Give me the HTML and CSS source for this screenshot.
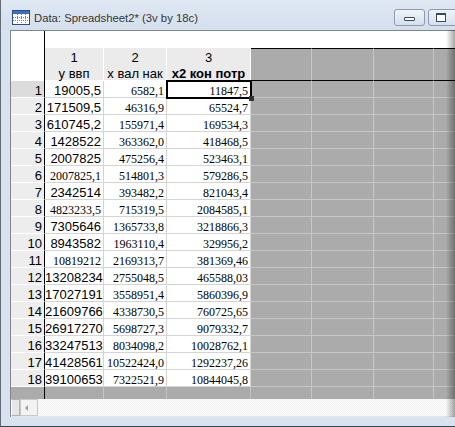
FILE: index.html
```html
<!DOCTYPE html>
<html>

<head>
  <title>Data: Spreadsheet2*</title>
  <link rel="stylesheet" href="styles.css">
</head>

<body>
  <div class="window">
    <div class="titlebar">
      <svg class="app-icon" width="18" height="15" viewBox="0 0 18 15">
        <rect x="0.5" y="0.5" width="17" height="14" fill="#fff" stroke="#2a4c8c"/>
        <rect x="1" y="1" width="16" height="3" fill="#3f6fc0"/>
        <g stroke="#5b82c9" stroke-dasharray="1 1">
          <line x1="5.5" y1="4" x2="5.5" y2="14"/>
          <line x1="9.5" y1="4" x2="9.5" y2="14"/>
          <line x1="13.5" y1="4" x2="13.5" y2="14"/>
          <line x1="1" y1="7.5" x2="17" y2="7.5"/>
          <line x1="1" y1="10.5" x2="17" y2="10.5"/>
        </g>
      </svg>
      <span class="title">Data: Spreadsheet2* (3v by 18c)</span>
      <div class="caption">
        <div class="cap-btn"><span class="min-icon"></span></div>
        <div class="cap-btn"><span class="max-icon"></span></div>
      </div>
    </div>

    <div class="client">
      <div class="sheet">
        <div class="row top-row">
          <div class="rh blank"></div>
          <div class="wide"></div>
        </div>

        <div class="row head-row">
          <div class="rh blank"></div>
          <div class="ch c1">1<br>у ввп</div>
          <div class="ch c2">2<br>х вал нак</div>
          <div class="ch c3"><span class="num">3</span><br><b>х2 кон потр</b></div>
          <div class="g gh g1"></div>
          <div class="g gh g2"></div>
          <div class="g gh g3"></div>
          <div class="g gh g4"></div>
        </div>

        <div class="row">
          <div class="rh sel">1</div>
          <div class="cell c1 a">19005,5</div>
          <div class="cell c2">6582,1</div>
          <div class="cell c3 sel">11847,5</div>
          <div class="g g1"></div><div class="g g2"></div><div class="g g3"></div><div class="g g4"></div>
        </div>
        <div class="row">
          <div class="rh">2</div>
          <div class="cell c1 a">171509,5</div>
          <div class="cell c2">46316,9</div>
          <div class="cell c3">65524,7</div>
          <div class="g g1"></div><div class="g g2"></div><div class="g g3"></div><div class="g g4"></div>
        </div>
        <div class="row">
          <div class="rh">3</div>
          <div class="cell c1 a">610745,2</div>
          <div class="cell c2">155971,4</div>
          <div class="cell c3">169534,3</div>
          <div class="g g1"></div><div class="g g2"></div><div class="g g3"></div><div class="g g4"></div>
        </div>
        <div class="row">
          <div class="rh">4</div>
          <div class="cell c1 a">1428522</div>
          <div class="cell c2">363362,0</div>
          <div class="cell c3">418468,5</div>
          <div class="g g1"></div><div class="g g2"></div><div class="g g3"></div><div class="g g4"></div>
        </div>
        <div class="row">
          <div class="rh">5</div>
          <div class="cell c1 a">2007825</div>
          <div class="cell c2">475256,4</div>
          <div class="cell c3">523463,1</div>
          <div class="g g1"></div><div class="g g2"></div><div class="g g3"></div><div class="g g4"></div>
        </div>
        <div class="row">
          <div class="rh">6</div>
          <div class="cell c1">2007825,1</div>
          <div class="cell c2">514801,3</div>
          <div class="cell c3">579286,5</div>
          <div class="g g1"></div><div class="g g2"></div><div class="g g3"></div><div class="g g4"></div>
        </div>
        <div class="row">
          <div class="rh">7</div>
          <div class="cell c1 a">2342514</div>
          <div class="cell c2">393482,2</div>
          <div class="cell c3">821043,4</div>
          <div class="g g1"></div><div class="g g2"></div><div class="g g3"></div><div class="g g4"></div>
        </div>
        <div class="row">
          <div class="rh">8</div>
          <div class="cell c1">4823233,5</div>
          <div class="cell c2">715319,5</div>
          <div class="cell c3">2084585,1</div>
          <div class="g g1"></div><div class="g g2"></div><div class="g g3"></div><div class="g g4"></div>
        </div>
        <div class="row">
          <div class="rh">9</div>
          <div class="cell c1 a">7305646</div>
          <div class="cell c2">1365733,8</div>
          <div class="cell c3">3218866,3</div>
          <div class="g g1"></div><div class="g g2"></div><div class="g g3"></div><div class="g g4"></div>
        </div>
        <div class="row">
          <div class="rh">10</div>
          <div class="cell c1 a">8943582</div>
          <div class="cell c2">1963110,4</div>
          <div class="cell c3">329956,2</div>
          <div class="g g1"></div><div class="g g2"></div><div class="g g3"></div><div class="g g4"></div>
        </div>
        <div class="row">
          <div class="rh">11</div>
          <div class="cell c1">10819212</div>
          <div class="cell c2">2169313,7</div>
          <div class="cell c3">381369,46</div>
          <div class="g g1"></div><div class="g g2"></div><div class="g g3"></div><div class="g g4"></div>
        </div>
        <div class="row">
          <div class="rh">12</div>
          <div class="cell c1 a">13208234</div>
          <div class="cell c2">2755048,5</div>
          <div class="cell c3">465588,03</div>
          <div class="g g1"></div><div class="g g2"></div><div class="g g3"></div><div class="g g4"></div>
        </div>
        <div class="row">
          <div class="rh">13</div>
          <div class="cell c1 a">17027191</div>
          <div class="cell c2">3558951,4</div>
          <div class="cell c3">5860396,9</div>
          <div class="g g1"></div><div class="g g2"></div><div class="g g3"></div><div class="g g4"></div>
        </div>
        <div class="row">
          <div class="rh">14</div>
          <div class="cell c1 a">21609766</div>
          <div class="cell c2">4338730,5</div>
          <div class="cell c3">760725,65</div>
          <div class="g g1"></div><div class="g g2"></div><div class="g g3"></div><div class="g g4"></div>
        </div>
        <div class="row">
          <div class="rh">15</div>
          <div class="cell c1 a">26917270</div>
          <div class="cell c2">5698727,3</div>
          <div class="cell c3">9079332,7</div>
          <div class="g g1"></div><div class="g g2"></div><div class="g g3"></div><div class="g g4"></div>
        </div>
        <div class="row">
          <div class="rh">16</div>
          <div class="cell c1 a">33247513</div>
          <div class="cell c2">8034098,2</div>
          <div class="cell c3">10028762,1</div>
          <div class="g g1"></div><div class="g g2"></div><div class="g g3"></div><div class="g g4"></div>
        </div>
        <div class="row">
          <div class="rh">17</div>
          <div class="cell c1 a">41428561</div>
          <div class="cell c2">10522424,0</div>
          <div class="cell c3">1292237,26</div>
          <div class="g g1"></div><div class="g g2"></div><div class="g g3"></div><div class="g g4"></div>
        </div>
        <div class="row">
          <div class="rh">18</div>
          <div class="cell c1 a">39100653</div>
          <div class="cell c2">7322521,9</div>
          <div class="cell c3">10844045,8</div>
          <div class="g g1"></div><div class="g g2"></div><div class="g g3"></div><div class="g g4"></div>
        </div>

        <div class="row tail-row">
          <div class="rh"></div>
          <div class="g c1"></div><div class="g c2"></div><div class="g c3"></div>
          <div class="g g1"></div><div class="g g2"></div><div class="g g3"></div><div class="g g4"></div>
        </div>
      </div>

      <div class="hscroll">
        <div class="split"></div>
        <div class="arrow-btn"><span class="arrow-left"></span></div>
      </div>
    </div>

    <div class="shade"></div>
  </div>
</body>

</html>
```

FILE: styles.css
```css
body {
  margin: 0;
  font-family: "Liberation Sans", Arial, sans-serif;
  background-color: #fff;
}

.window {
  position: relative;
  width: 455px;
  height: 427px;
  box-sizing: border-box;
  overflow: hidden;
  background-color: #d8e3ef;
  border-left: 1px solid #626c78;
  border-bottom: 1px solid #3a424c;
}

/* title bar */

.titlebar {
  height: 30px;
  display: flex;
  align-items: center;
  background: linear-gradient(#dfe8f3, #d4dfec);
}

.app-icon {
  margin-left: 11px;
  margin-top: 4px;
  flex: none;
}

.title {
  margin-left: 4px;
  margin-top: 5px;
  font-size: 11.3px;
  color: #363636;
  white-space: nowrap;
}

.caption {
  margin-left: auto;
  margin-right: -4px;
  align-self: flex-start;
  margin-top: 9px;
  display: flex;
  gap: 3px;
  flex: none;
}

.cap-btn {
  width: 31px;
  height: 17px;
  box-sizing: border-box;
  border: 1px solid #8d9bb0;
  border-radius: 3px;
  background: linear-gradient(#eef3f9, #d6e0ec);
  position: relative;
}

.min-icon {
  position: absolute;
  left: 9px;
  top: 7px;
  width: 9px;
  height: 2px;
  border: 1px solid #3c495a;
  border-radius: 1px;
  background-color: #fff;
}

.max-icon {
  position: absolute;
  left: 7px;
  top: 3px;
  width: 8px;
  height: 6px;
  border: 1px solid #3c495a;
  border-top-width: 2px;
  background-color: #fff;
}

/* client area */

.client {
  margin-left: 9px;
  border-top: 1px solid #7d8794;
  border-left: 1px solid #7d8794;
  height: 386px;
  background-color: #fff;
}

.row {
  display: flex;
}

.row > div {
  box-sizing: border-box;
  flex: none;
  height: 17px;
  white-space: nowrap;
}

.rh {
  width: 34px;
  border-right: 1px solid #000;
  border-bottom: 1px solid #fff;
  background-color: #ededed;
  text-align: right;
  padding: 2px 2px 0 0;
  line-height: 16px;
  font-size: 13px;
}

.rh.sel {
  background-color: #dcdcdc;
}

.rh.blank {
  background-color: #fff;
  border-bottom: none;
}

.c1 { width: 59px; }
.c2 { width: 63px; }
.c3 { width: 84px; }
.g1 { width: 61px; }
.g2 { width: 62px; }
.g3 { width: 60px; }
.row > .g4 { flex: 1; border-right: none; }

.top-row .wide {
  flex: 1;
  background-color: #fff;
}

.head-row > div {
  height: 33px;
}

.ch {
  background-color: #ebebeb;
  border-right: 1px solid #fff;
  border-bottom: 1px solid #fff;
  text-align: center;
  padding-top: 2px;
  line-height: 16px;
  font-size: 13px;
}

.ch b {
  font-weight: bold;
}

.cell {
  border-right: 1px solid #d4d4d4;
  border-bottom: 1px solid #d4d4d4;
  text-align: right;
  padding: 2px 2px 0 0;
  line-height: 16px;
  font-family: "Liberation Serif", "Times New Roman", serif;
  font-size: 12px;
}

.cell.a {
  font-family: "Liberation Sans", Arial, sans-serif;
  font-size: 13px;
}

.cell.sel {
  position: relative;
  outline: 2px solid #000;
  outline-offset: -1px;
}

.cell.sel::after {
  content: "";
  position: absolute;
  right: -4px;
  bottom: -4px;
  width: 5px;
  height: 5px;
  background-color: #333;
}

.g {
  background-color: #ababab;
  border-right: 1px solid #c6c6c6;
  border-bottom: 1px solid #c6c6c6;
}

.head-row .gh {
  border-top: 1px solid #000;
  border-bottom: 1px solid #000;
}

.tail-row > div {
  height: 12px;
  border-bottom: none;
}

.tail-row .rh {
  background-color: #ababab;
}

/* horizontal scroll bar */

.hscroll {
  height: 18px;
  display: flex;
  box-sizing: border-box;
  border-bottom: 1px solid #e4e4e4;
  background-color: #f6f6f6;
  background-image: repeating-conic-gradient(#fdfdfd 0 25%, #f0f0f0 0 50%);
  background-size: 2px 2px;
}

.split {
  width: 9px;
  box-sizing: border-box;
  border: 1px solid #b2b2b2;
  border-left-color: #fff;
  background-color: #e6e6e6;
}

.arrow-btn {
  width: 18px;
  box-sizing: border-box;
  border: 1px solid #c9c9c9;
  background-color: #f3f3f3;
  display: flex;
  align-items: center;
  padding-left: 4px;
}

.arrow-left {
  width: 0;
  height: 0;
  border-top: 3px solid transparent;
  border-bottom: 3px solid transparent;
  border-right: 3px solid #9c9c9c;
}

.shade {
  position: absolute;
  top: 30px;
  right: 0;
  bottom: 9px;
  width: 9px;
  background: linear-gradient(to right, rgba(0, 0, 0, 0), rgba(0, 0, 0, 0.35));
}
```
